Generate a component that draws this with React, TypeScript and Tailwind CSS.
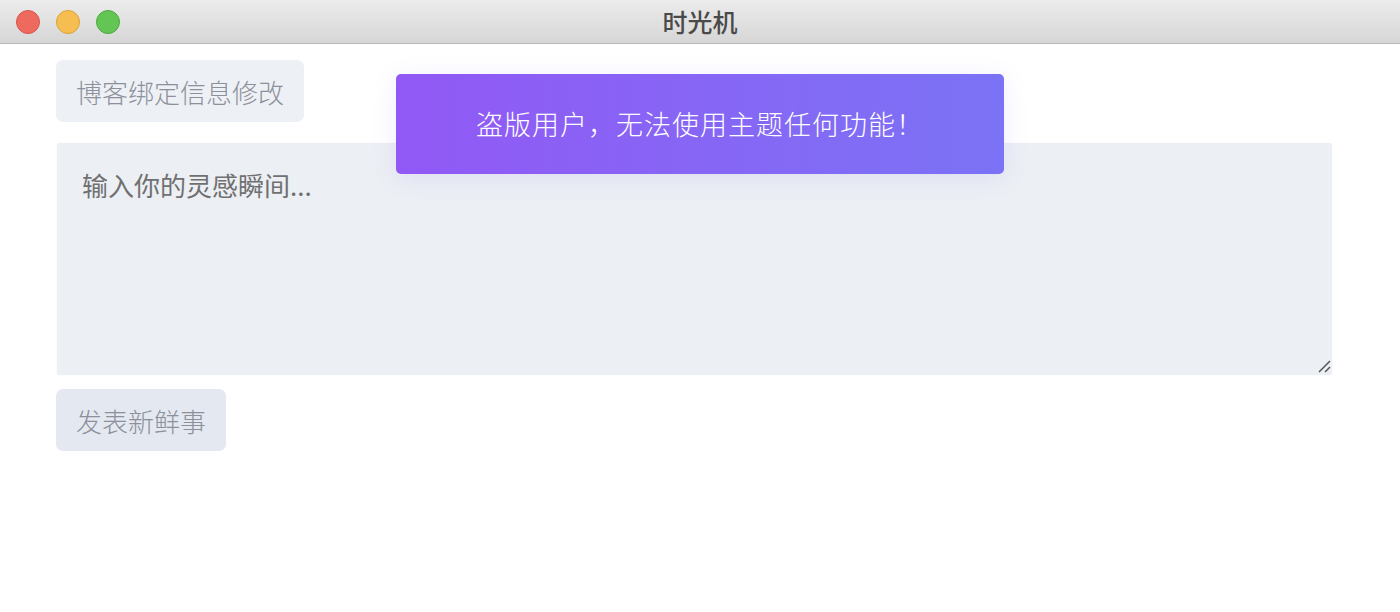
import React from "react";

const cjk = "font-['Noto_Sans_CJK_SC',sans-serif]";

function TrafficLights() {
  return (
    <div className="flex items-center gap-[16px] pl-[16px]">
      <span className="h-[24px] w-[24px] rounded-full border border-[#d9534a] bg-[#ee6a5f]" />
      <span className="h-[24px] w-[24px] rounded-full border border-[#dca234] bg-[#f6be50]" />
      <span className="h-[24px] w-[24px] rounded-full border border-[#4ea93f] bg-[#62c554]" />
    </div>
  );
}

export default function App() {
  return (
    <div className={`relative flex h-[612px] w-[1400px] flex-col bg-white ${cjk}`}>
      <div className="relative flex h-[44px] items-center border-b border-[#b9b9b9] bg-gradient-to-b from-[#ececec] to-[#d6d6d6]">
        <TrafficLights />
        <div className="absolute inset-0 flex items-center justify-center text-[25px] font-medium text-[#4a4a4a]">
          时光机
        </div>
      </div>

      <div className="flex flex-col px-[56px] pt-[16px]">
        <button className="h-[62px] w-[248px] rounded-[7px] bg-[#edf0f5] text-[26px] font-light text-[#8d909b]">
          博客绑定信息修改
        </button>

        <div className="ml-px mt-[21px] flex h-[232px] w-[1275px] flex-col rounded-[3px] bg-[#eceff4] px-[25px] pt-[22px] shadow-[0_0_2px_rgba(0,0,0,0.05)]">
          <span className="text-[26px] font-normal text-[#707070]">输入你的灵感瞬间...</span>
          <div className="mt-auto flex justify-end pb-[2px]">
            <svg width="14" height="14" viewBox="0 0 14 14" className="-mr-[24px]">
              <path d="M2 13 L13 2 M8 13 L13 8" stroke="#555" strokeWidth="1.5" />
            </svg>
          </div>
        </div>

        <button className="mt-[14px] h-[62px] w-[170px] rounded-[7px] bg-[#e4e8f0] text-[26px] font-light text-[#8d909b]">
          发表新鲜事
        </button>
      </div>

      <div className="absolute left-[396px] top-[74px] flex h-[100px] w-[608px] items-center justify-center rounded-[5px] bg-gradient-to-r from-[#9158f5] to-[#7b72f5] text-[27px] font-light tracking-[1px] text-white shadow-[0_4px_24px_rgba(120,110,240,0.12)]">
        <span>盗版用户，无法使用主题任何功能！</span>
      </div>
    </div>
  );
}
